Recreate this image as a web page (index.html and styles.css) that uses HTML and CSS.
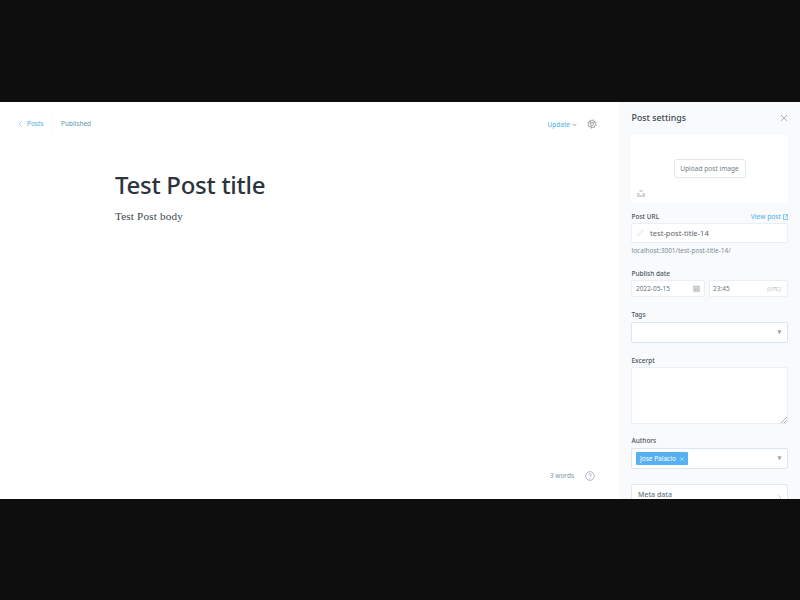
FILE: index.html
```html
<!DOCTYPE html>
<html lang="en">
<head>
<meta charset="utf-8">
<title>Post editor</title>
<link rel="stylesheet" href="styles.css">
</head>
<body>
<div class="app">
  <main class="editor">
    <header class="toolbar">
      <a class="back"><svg width="5" height="8" viewBox="0 0 5 8"><path d="M4 1 1 4l3 3"/></svg><span class="posts">Posts</span></a>
      <span class="status"><span class="published">Published</span></span>
      <span class="update"><span class="update-text">Update</span><svg width="5" height="4" viewBox="0 0 5 4"><path d="m.7.8 1.8 2 1.8-2"/></svg></span>
      <svg class="gear" width="10" height="10" viewBox="0 0 10 10"><circle cx="5" cy="5" r="3.5"/><circle cx="5" cy="5" r="4.2" stroke-dasharray="1.6 1.7"/><circle cx="5" cy="5" r="1.5"/><path d="m6 4 2-1.700M4 4.300 2.600 2M4.800 6.500 4.500 8.500"/></svg>
    </header>
    <article class="post">
      <h1><span>Test Post title</span></h1>
      <p><span>Test Post body</span></p>
    </article>
    <footer class="foot">
      <span class="words">3 words</span>
      <svg width="10" height="10" viewBox="0 0 10 10"><circle cx="5" cy="5" r="4.300"/><path d="M3.700 4.100C3.700 2.400 6.400 2.500 6.300 4 6.200 4.900 5 4.900 5 6M5 6.800v.8"/></svg>
    </footer>
  </main>
  <aside class="settings">
    <div class="head"><h2>Post settings</h2><svg width="8" height="8" viewBox="0 0 8 8"><path d="m1 1 6 6M7 1 1 7"/></svg></div>
    <div class="upload">
      <button>Upload post image</button>
      <svg class="unsplash" width="8" height="7" viewBox="0 0 8 7"><path d="M2.500 0h3v2h-3zM0 3h2.500v2h3V3H8v4H0z"/></svg>
    </div>
    <div class="row url-label"><label>Post URL</label><a class="view"><span>View post</span><svg width="5" height="6" viewBox="0 0 5 6"><path d="M2 .6H.5v4.900h4V3.500M2.500.6h2v2M4.500.6 2 3.500"/></svg></a></div>
    <div class="field url"><svg width="8" height="8" viewBox="0 0 8 8"><path d="m3 5 2-2M3.500 2.700 5 1.200c1-1 2.700.6 1.700 1.600L5.300 4.300M4.500 5.300 3 6.800C2 7.800.300 6.200 1.300 5.200l1.400-1.500"/></svg><span>test-post-title-14</span></div>
    <div class="hint">localhost:3001/test-post-title-14/</div>
    <div class="row date-label"><label>Publish date</label></div>
    <div class="dates">
      <div class="field"><span>2022-05-15</span><svg width="7" height="7" viewBox="0 0 7 7"><path fill="#d3d7d9" d="M0 1h7v6H0z"/><path stroke="#b3b9bc" d="M0 1.500h7M1.500 0v2M5.500 0v2M2.500 3v4M4.500 3v4M0 4.500h7" stroke-width=".5"/></svg></div>
      <div class="field"><span>23:45</span><small>(UTC)</small></div>
    </div>
    <div class="row tags-label"><label>Tags</label></div>
    <div class="field select"><svg width="5" height="4" viewBox="0 0 5 4"><path d="M.4.300h4.200L3 3.700H2z"/></svg></div>
    <div class="row excerpt-label"><label>Excerpt</label></div>
    <div class="field excerpt"><svg width="6" height="6" viewBox="0 0 6 6"><path d="M0 6 6 0M3 6l3-3"/></svg></div>
    <div class="row authors-label"><label>Authors</label></div>
    <div class="field select"><span class="tag"><span>Jose Palacio</span><svg width="4" height="4" viewBox="0 0 4 4"><path d="m.3.3 3.400 3.400M3.700.3.300 3.700"/></svg></span><svg width="5" height="4" viewBox="0 0 5 4"><path d="M.4.300h4.200L3 3.700H2z"/></svg></div>
    <div class="field meta"><b>Meta data</b><svg width="5" height="8" viewBox="0 0 5 8"><path d="m1 1 3 3-3 3"/></svg></div>
  </aside>
</div>
</body>
</html>
```
FILE: styles.css
```css
* { box-sizing: border-box; }
body {
  margin: 0;
  height: 600px;
  padding: 102px 0 101px;
  overflow: hidden;
  background: #0e0e0e;
  font: 6.5px/10px "Noto Sans", "Open Sans", sans-serif;
  color: #394047;
}
svg { display: block; flex: none; fill: none; stroke: #8d9aa5; stroke-width: .7; }
span { white-space: nowrap; }
.app { display: flex; height: 397px; overflow: hidden; background: #fff; }
.editor { width: 619px; display: flex; flex-direction: column; }

.toolbar { height: 44px; display: flex; align-items: center; padding: 0 22px 0 18px; color: #55a9d8; }
.back { display: flex; align-items: center; width: 34px; gap: 4px; }
.back svg, .update svg { stroke: #7cc2eb; }
.status { height: 18px; line-height: 18px; border-left: 1px solid #f8fafb; padding-left: 8px; color: #6495ac; }
.update { display: flex; align-items: center; gap: 2px; margin-left: auto; padding-top: 1px; font-size: 6.500px; color: #4badec; }
.update svg { stroke: #6c8fa4; }
.gear { margin-left: 10px; stroke: #858e94; }

.post { padding: 21px 115px; flex: 1; }
h1 { margin: 0; font-size: 24px; line-height: 35px; font-weight: 500; color: #2b353c; letter-spacing: -.27px; }
.post p { margin: 6px 0 0; font: 11.200px/16px "Liberation Serif", serif; letter-spacing: .16px; color: #3c454b; }
.foot { height: 47px; display: flex; align-items: center; justify-content: flex-end; gap: 11px; padding-right: 24px; color: #7b95a0; }

.settings { width: 181px; padding: 0 12px; background: #f8fafc; }
.head { height: 33px; display: flex; align-items: center; justify-content: space-between; }
.head svg { stroke: #8e979e; margin-bottom: 1px; }
h2 { margin: 0 0 0 .6px; font-size: 8.800px; line-height: 13px; font-weight: 500; color: #3c464d; }
.upload { position: relative; height: 67px; display: flex; align-items: center; justify-content: center; background: #fff; border-radius: 2px; }
.upload button { width: 72px; height: 19px; padding: 0; border: 1px solid #dfe7eb; border-radius: 3px; background: #fff; font: inherit; font-size: 6.600px; color: #72808a; white-space: nowrap; }
.unsplash { position: absolute; left: 6px; bottom: 5px; fill: #d0d2d4; stroke: none; }
.row { display: flex; justify-content: space-between; align-items: center; height: 10px; padding-left: .5px; }
label { font-weight: 500; color: #4c555b; }
.url-label { margin: 10px 0 1px; }
.view { display: flex; align-items: center; gap: 2px; color: #4badec; font-size: 6.700px; }
.view svg { stroke: #4badec; }
.field { display: flex; align-items: center; justify-content: space-between; background: #fff; border: 1px solid #e9f0f5; border-radius: 2px; color: #69747b; }
.url { height: 20px; justify-content: flex-start; padding-left: 4px; gap: 6px; font-size: 7.600px; color: #5a6268; }
.url svg { stroke: #d8dde0; }
.hint { margin: 2px 0 0 .5px; line-height: 11px; color: #7a8e99; white-space: nowrap; }
.date-label { margin: 13px 0 1px; }
.dates { display: grid; grid-template-columns: 74px 79px; gap: 4px; }
.dates .field { height: 17px; padding: 0 4px; }
.dates .field:last-child { padding-left: 3px; }
.dates svg { stroke: none; }
.dates small { font-size: 5.5px; color: #b0b8be; padding-right: 2px; }
.tags-label { margin: 13px 0 2px; }
.select { height: 21px; padding: 0 5px 0 4px; border-color: #dae7f0; }
.select > svg { fill: #a1a7ab; stroke: none; margin: 0 0 2px auto; }
.excerpt-label { margin: 13px 0 1px; }
.excerpt { height: 57px; align-items: flex-end; justify-content: flex-end; }
.authors-label { margin: 12px 0 2px; }
.tag { display: flex; align-items: center; justify-content: space-between; width: 52px; height: 13px; padding: 0 4px; border-radius: 1px; background: #57b0f0; color: #fff; }
.tag svg { stroke: #c6e6ff; }
.meta { height: 30px; margin-top: 15px; padding: 0 5px 8px 6px; border-color: #dfe8ee; }
.meta b { font-size: 7px; font-weight: 500; }
.meta svg { margin-top: 6px; stroke: #b4bdc3; }
```
